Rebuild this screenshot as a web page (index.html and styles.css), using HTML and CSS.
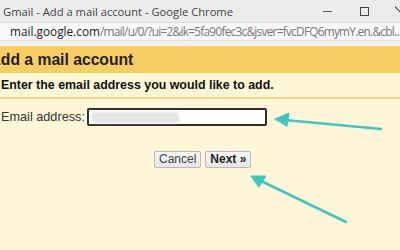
FILE: index.html
```html
<!DOCTYPE html>
<html>
<head>
<meta charset="utf-8">
<link rel="stylesheet" href="styles.css">
</head>
<body>
<div class="window">
  <div class="titlebar">
    <span class="title">Gmail - Add a mail account - Google Chrome</span>
    <div class="controls">
      <span class="ctl min"></span>
      <span class="ctl max"></span>
      <span class="ctl close"></span>
    </div>
  </div>
  <div class="urlbar"><span class="host">mail.google.com</span><span class="path">/mail/u/0/?ui=2&amp;ik=5fa90fec3c&amp;jsver=fvcDFQ6mymY.en.&amp;cbl...</span></div>
  <div class="strip"></div>
  <div class="header"><h1>Add a mail account</h1></div>
  <div class="instruction">Enter the email address you would like to add.</div>
  <div class="form">
    <label class="label">Email address:</label>
    <div class="input"><span class="blur"></span></div>
  </div>
  <div class="buttons">
    <button class="btn">Cancel</button>
    <button class="btn primary">Next »</button>
  </div>
</div>
<svg class="arrows" width="400" height="250" viewBox="0 0 400 250">
  <g stroke="#3ec6c3" stroke-width="2.5" stroke-linecap="round" fill="#3ec6c3">
    <line x1="381" y1="129" x2="285" y2="120"/>
    <polygon points="275,119 289,113 287,126" stroke-width="1" stroke-linejoin="round"/>
    <line x1="346" y1="222" x2="259" y2="180"/>
    <polygon points="251,176 266,176 259,187" stroke-width="1" stroke-linejoin="round"/>
  </g>
</svg>
</body>
</html>
```
FILE: styles.css
```css
html, body {
  margin: 0;
  padding: 0;
}
body {
  width: 400px;
  height: 250px;
  overflow: hidden;
  position: relative;
  background: #fff6d7;
  font-family: "Liberation Sans", Arial, sans-serif;
  color: #222;
}
.titlebar {
  height: 22px;
  background: #ececec;
  display: flex;
  align-items: center;
  justify-content: space-between;
  font-family: "Open Sans", "Noto Sans", sans-serif;
  font-size: 11.2px;
  color: #444;
}
.title {
  padding-left: 3px;
}
.controls {
  display: flex;
  align-items: center;
  height: 22px;
}
.ctl {
  display: block;
  position: relative;
}
.min {
  width: 9px;
  height: 1px;
  background: #555;
  margin-right: 28px;
}
.max {
  width: 7px;
  height: 7px;
  border: 1px solid #444;
  margin-right: 26px;
}
.close {
  width: 5px;
  height: 10px;
  overflow: hidden;
}
.close::before {
  content: "";
  position: absolute;
  left: 0;
  top: 0;
  width: 13px;
  height: 1px;
  background: #444;
  transform: rotate(45deg);
  transform-origin: 0 0;
}
.urlbar {
  height: 18px;
  background: #f8f8f8;
  border-top: 1px solid #dcdcdc;
  box-sizing: border-box;
  padding-left: 10px;
  font-family: "Open Sans", "Noto Sans", sans-serif;
  font-size: 11.8px;
  line-height: 17px;
  white-space: nowrap;
  overflow: hidden;
}
.host {
  color: #222;
}
.path {
  color: #777;
  letter-spacing: -0.72px;
}
.strip {
  height: 5px;
  background: #f1efe9;
  border-top: 1px solid #e2e2e2;
}
.header {
  height: 27px;
  background: #f8cd62;
  display: flex;
  align-items: center;
  overflow: hidden;
}
.header h1 {
  margin: 0 0 0 -10.5px;
  font-size: 15.7px;
  font-weight: bold;
  color: #222;
  white-space: nowrap;
}
.instruction {
  height: 26px;
  box-sizing: border-box;
  border-bottom: 2px solid #f6d97f;
  display: flex;
  align-items: center;
  font-size: 12.4px;
  font-weight: bold;
  color: #111;
  padding-left: 1px;
  margin-bottom: 9px;
  white-space: nowrap;
}
.form {
  display: flex;
  align-items: center;
  padding-left: 1px;
}
.label {
  font-size: 12.7px;
  color: #333;
  width: 86px;
  flex-shrink: 0;
  white-space: nowrap;
}
.input {
  width: 180px;
  height: 18px;
  box-sizing: border-box;
  border: 2px solid #2f2f2f;
  border-radius: 2px;
  background: #fff;
  display: flex;
  align-items: center;
  padding-left: 2px;
}
.blur {
  display: block;
  width: 88px;
  height: 11px;
  background: #e4e4e4;
  border-radius: 3px;
  filter: blur(1.5px);
}
.buttons {
  display: flex;
  justify-content: flex-start;
  gap: 4px;
  padding-left: 154px;
  margin-top: 25px;
}
.btn {
  height: 17px;
  padding: 0 4px;
  border: 1px solid #b9b9b9;
  border-radius: 2px;
  background: linear-gradient(#f7f7f7, #e6e6e6);
  font-family: "Liberation Sans", Arial, sans-serif;
  font-size: 12px;
  color: #444;
  line-height: 15px;
}
.btn.primary {
  font-weight: bold;
  color: #222;
}
.arrows {
  position: absolute;
  left: 0;
  top: 0;
  pointer-events: none;
}
```
